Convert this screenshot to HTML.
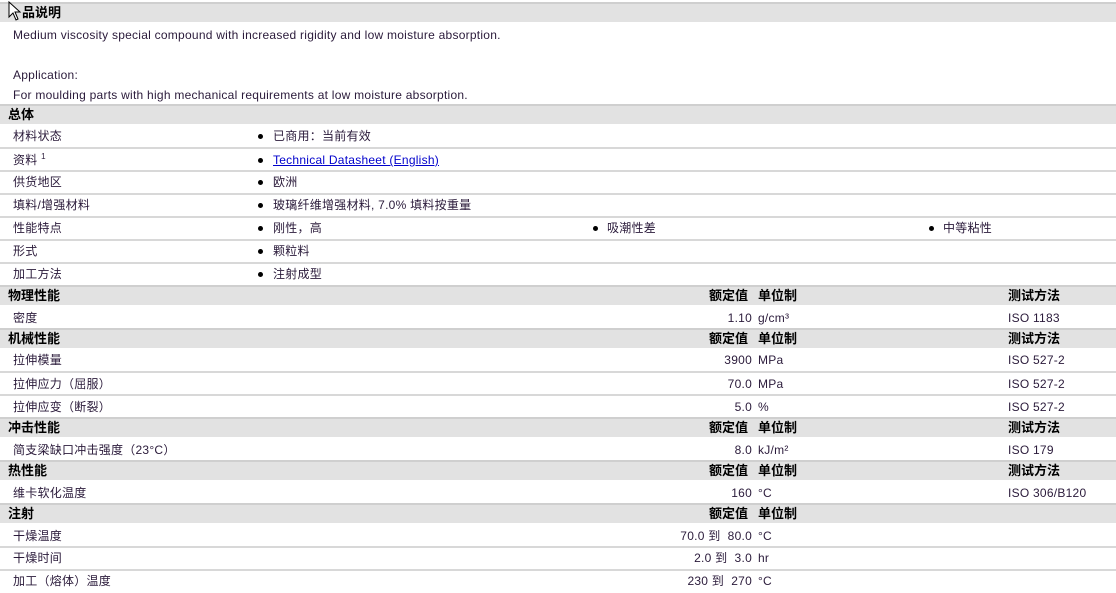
<!DOCTYPE html>
<html><head><meta charset="utf-8"><style>
body{margin:0;width:1116px;height:593px;overflow:hidden;background:#fff;font-family:"Liberation Sans","Noto Sans CJK SC",sans-serif;font-size:12px;color:#222;position:relative}
.h{position:absolute;left:0;width:1116px;height:18px;background:#e2e2e2;border-top:2px solid #cfcfcf;font-weight:bold;font-size:13px;line-height:18px;color:#000}
.h span{position:absolute;top:0}
.sep{position:absolute;left:0;width:1116px;height:2px;background:#d8d8d8}
.t{position:absolute;line-height:14px;white-space:nowrap;color:#2a1a3a;letter-spacing:0.25px}
.r{text-align:right;width:100px}
.b{position:absolute;width:5px;height:5px;border-radius:50%;background:#000}
a{color:#00c;text-decoration:underline}
sup{line-height:0}
</style></head><body>
<div class="h" style="top:2px"><span style="left:22px">品说明</span></div>
<svg style="position:absolute;left:8px;top:1px" width="14" height="20"><path d="M1 1 L1 16 L5 12 L8 19 L10 18 L7 11 L12 11 Z" fill="#fff" stroke="#000"/></svg>
<div class="t" style="left:13px;top:28px">Medium viscosity special compound with increased rigidity and low moisture absorption.</div>
<div class="t" style="left:13px;top:68px">Application:</div>
<div class="t" style="left:13px;top:88px">For moulding parts with high mechanical requirements at low moisture absorption.</div>
<div class="h" style="top:104px"><span style="left:8px">总体</span></div>
<div class="t" style="left:13px;top:129px">材料状态</div><div class="b" style="left:258px;top:134px"></div><div class="t" style="left:273px;top:129px">已商用：当前有效</div>
<div class="sep" style="top:147px"></div>
<div class="t" style="left:13px;top:153px">资料 <sup style="font-size:8px">1</sup></div><div class="b" style="left:258px;top:158px"></div><div class="t" style="left:273px;top:153px"><a>Technical Datasheet (English)</a></div>
<div class="sep" style="top:170px"></div>
<div class="t" style="left:13px;top:175px">供货地区</div><div class="b" style="left:258px;top:180px"></div><div class="t" style="left:273px;top:175px">欧洲</div>
<div class="sep" style="top:193px"></div>
<div class="t" style="left:13px;top:198px">填料/增强材料</div><div class="b" style="left:258px;top:203px"></div><div class="t" style="left:273px;top:198px">玻璃纤维增强材料, 7.0% 填料按重量</div>
<div class="sep" style="top:216px"></div>
<div class="t" style="left:13px;top:221px">性能特点</div><div class="b" style="left:258px;top:226px"></div><div class="t" style="left:273px;top:221px">刚性，高</div><div class="b" style="left:593px;top:226px"></div><div class="t" style="left:607px;top:221px">吸潮性差</div><div class="b" style="left:929px;top:226px"></div><div class="t" style="left:943px;top:221px">中等粘性</div>
<div class="sep" style="top:239px"></div>
<div class="t" style="left:13px;top:244px">形式</div><div class="b" style="left:258px;top:249px"></div><div class="t" style="left:273px;top:244px">颗粒料</div>
<div class="sep" style="top:262px"></div>
<div class="t" style="left:13px;top:267px">加工方法</div><div class="b" style="left:258px;top:272px"></div><div class="t" style="left:273px;top:267px">注射成型</div>

<div class="h" style="top:285px"><span style="left:8px">物理性能</span><span style="left:709px">额定值</span><span style="left:758px">单位制</span><span style="left:1008px">测试方法</span></div>
<div class="t" style="left:13px;top:311px">密度</div><div class="t r" style="left:652px;top:311px">1.10</div><div class="t" style="left:758px;top:311px">g/cm³</div><div class="t" style="left:1008px;top:311px">ISO 1183</div>

<div class="h" style="top:328px"><span style="left:8px">机械性能</span><span style="left:709px">额定值</span><span style="left:758px">单位制</span><span style="left:1008px">测试方法</span></div>
<div class="t" style="left:13px;top:353px">拉伸模量</div><div class="t r" style="left:652px;top:353px">3900</div><div class="t" style="left:758px;top:353px">MPa</div><div class="t" style="left:1008px;top:353px">ISO 527-2</div>
<div class="sep" style="top:371px"></div>
<div class="t" style="left:13px;top:377px">拉伸应力（屈服）</div><div class="t r" style="left:652px;top:377px">70.0</div><div class="t" style="left:758px;top:377px">MPa</div><div class="t" style="left:1008px;top:377px">ISO 527-2</div>
<div class="sep" style="top:394px"></div>
<div class="t" style="left:13px;top:400px">拉伸应变（断裂）</div><div class="t r" style="left:652px;top:400px">5.0</div><div class="t" style="left:758px;top:400px">%</div><div class="t" style="left:1008px;top:400px">ISO 527-2</div>

<div class="h" style="top:417px"><span style="left:8px">冲击性能</span><span style="left:709px">额定值</span><span style="left:758px">单位制</span><span style="left:1008px">测试方法</span></div>
<div class="t" style="left:13px;top:443px">简支梁缺口冲击强度（23°C）</div><div class="t r" style="left:652px;top:443px">8.0</div><div class="t" style="left:758px;top:443px">kJ/m²</div><div class="t" style="left:1008px;top:443px">ISO 179</div>

<div class="h" style="top:460px"><span style="left:8px">热性能</span><span style="left:709px">额定值</span><span style="left:758px">单位制</span><span style="left:1008px">测试方法</span></div>
<div class="t" style="left:13px;top:486px">维卡软化温度</div><div class="t r" style="left:652px;top:486px">160</div><div class="t" style="left:758px;top:486px">°C</div><div class="t" style="left:1008px;top:486px">ISO 306/B120</div>

<div class="h" style="top:503px"><span style="left:8px">注射</span><span style="left:709px">额定值</span><span style="left:758px">单位制</span></div>
<div class="t" style="left:13px;top:529px">干燥温度</div><div class="t r" style="left:652px;top:529px">70.0 到&nbsp; 80.0</div><div class="t" style="left:758px;top:529px">°C</div>
<div class="sep" style="top:546px"></div>
<div class="t" style="left:13px;top:551px">干燥时间</div><div class="t r" style="left:652px;top:551px">2.0 到&nbsp; 3.0</div><div class="t" style="left:758px;top:551px">hr</div>
<div class="sep" style="top:569px"></div>
<div class="t" style="left:13px;top:574px">加工（熔体）温度</div><div class="t r" style="left:652px;top:574px">230 到&nbsp; 270</div><div class="t" style="left:758px;top:574px">°C</div>
</body></html>
